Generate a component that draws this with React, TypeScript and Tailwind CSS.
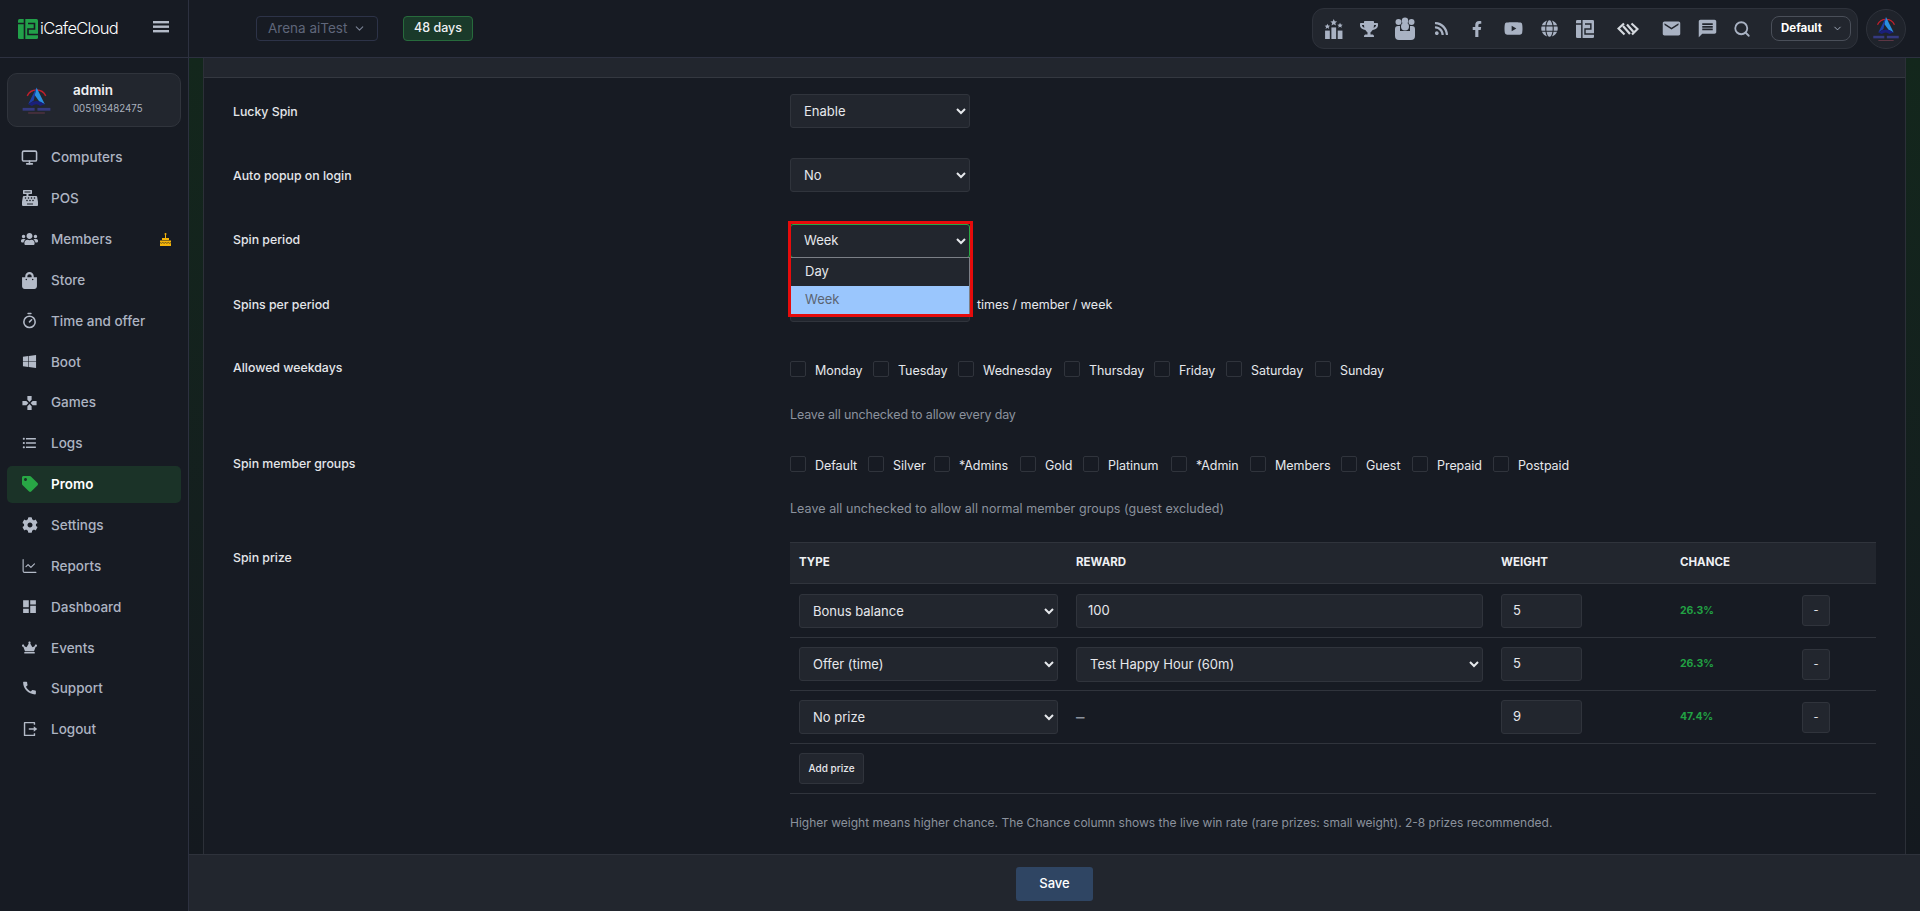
import { ChevronDown, Search, Timer, ChartLine, Monitor } from "lucide-react"
import {
  FaCashRegister,
  FaShoppingBag,
  FaUsers,
  FaWindows,
  FaTag,
  FaCog,
  FaCrown,
  FaTrophy,
  FaRss,
  FaFacebookF,
  FaYoutube,
  FaGlobe,
} from "react-icons/fa"
import { MdGames, MdDashboard, MdCall, MdEmail, MdMessage, MdFormatListBulleted } from "react-icons/md"
import { RiLogoutBoxRLine } from "react-icons/ri"

const navItems = [
  { label: "Computers", icon: <Monitor size={19} strokeWidth={2.2} /> },
  { label: "POS", icon: <FaCashRegister size={16} /> },
  { label: "Members", icon: <FaUsers size={18} />, cake: true },
  { label: "Store", icon: <FaShoppingBag size={17} /> },
  { label: "Time and offer", icon: <Timer size={17} strokeWidth={2.2} /> },
  { label: "Boot", icon: <FaWindows size={15} /> },
  { label: "Games", icon: <MdGames size={18} /> },
  { label: "Logs", icon: <MdFormatListBulleted size={18} /> },
  { label: "Promo", icon: <FaTag size={16} />, active: true },
  { label: "Settings", icon: <FaCog size={16} /> },
  { label: "Reports", icon: <ChartLine size={18} strokeWidth={1.6} /> },
  { label: "Dashboard", icon: <MdDashboard size={17} /> },
  { label: "Events", icon: <FaCrown size={15} /> },
  { label: "Support", icon: <MdCall size={18} /> },
  { label: "Logout", icon: <RiLogoutBoxRLine size={18} /> },
]

const weekdays = [
  { label: "Monday", w: "w-[83px]" },
  { label: "Tuesday", w: "w-[85px]" },
  { label: "Wednesday", w: "w-[106px]" },
  { label: "Thursday", w: "w-[90px]" },
  { label: "Friday", w: "w-[72px]" },
  { label: "Saturday", w: "w-[89px]" },
  { label: "Sunday", w: "w-[80px]" },
]

const groups = [
  { label: "Default", w: "w-[78px]" },
  { label: "Silver", w: "w-[66px]" },
  { label: "*Admins", w: "w-[86px]" },
  { label: "Gold", w: "w-[63px]" },
  { label: "Platinum", w: "w-[88px]" },
  { label: "*Admin", w: "w-[79px]" },
  { label: "Members", w: "w-[91px]" },
  { label: "Guest", w: "w-[71px]" },
  { label: "Prepaid", w: "w-[81px]" },
  { label: "Postpaid", w: "w-[90px]" },
]

const fieldClass =
  "bg-[#22262e] border border-[#30343c] rounded-[3px] text-[13px] text-[#e6e8ec] outline-none [color-scheme:dark]"

function BrandMark({ color, line, size }: { color: string; line: string; size: number }) {
  return (
    <svg width={size} height={size} viewBox="0 0 20 20">
      <rect width="20" height="20" rx="1.5" fill={color} />
      <path d="M6.5 0V20M0 4.5H6.5M10 4.5H16.5V10H10V15.5H20" stroke={line} strokeWidth="1.6" fill="none" />
    </svg>
  )
}

function ArenaLogo({ size }: { size: number }) {
  return (
    <svg width={size} height={size} viewBox="0 0 40 40">
      <path d="M10 15A11 11 0 0 1 30 15" stroke="#c21f2b" strokeWidth="1.5" fill="none" />
      <path d="M20 6L29 24L23 21L18 14Z" fill="#2a8fe0" />
      <path d="M20 6L11 24L17 20Z" fill="#1c3fa8" />
      <path d="M11 24Q20 17 29 24L24 26Q20 22 15 26Z" fill="#1a1f7a" />
      <rect x="5" y="28" width="13" height="3" fill="#353a80" />
      <rect x="21" y="28" width="14" height="3" fill="#353a80" />
      <rect x="11" y="33" width="18" height="1" fill="#6a3a4a" />
    </svg>
  )
}

function CakeIcon() {
  return (
    <svg className="ml-auto mr-[10px]" width="11" height="13" viewBox="0 0 11 13" fill="#f5b50a">
      <rect x="5" y="1.500" width="1" height="3.500" />
      <circle cx="5.500" cy="1" r="1" />
      <path d="M2 5H9V7H2Z" />
      <path d="M0 7.500H11V13H0Z" />
      <path d="M0 9.500Q1.400 11 2.750 9.500Q4.100 11 5.500 9.500Q6.900 11 8.250 9.500Q9.600 11 11 9.500" stroke="#171b23" strokeWidth=".6" fill="none" />
    </svg>
  )
}

function RankIcon() {
  return (
    <svg width="19" height="20" viewBox="0 0 18 19" fill="currentColor">
      <rect x="1" y="11" width="4.5" height="8" />
      <rect x="7" y="8" width="4.5" height="11" />
      <rect x="13" y="11" width="4.5" height="8" />
      <path d="M9.2 0l1 2.2 2.3.2-1.8 1.5.6 2.3-2.1-1.3-2.1 1.3.6-2.3L6 2.4l2.3-.2z" />
      <path d="M3.2 4.5l.8 1.7 1.8.2-1.4 1.2.5 1.8-1.7-1-1.7 1 .5-1.8L.6 6.400l1.800-.2z" />
      <path d="M15.200 3.500l.8 1.700 1.800.2-1.400 1.200.5 1.800-1.700-1-1.700 1 .5-1.800-1.400-1.200 1.800-.2z" />
    </svg>
  )
}

function GroupIcon() {
  return (
    <svg width="20" height="23" viewBox="0 0 20 23" fill="currentColor">
      <circle cx="3.500" cy="5" r="3" />
      <circle cx="16.500" cy="5" r="3" />
      <circle cx="10" cy="3.800" r="3.200" />
      <circle cx="10" cy="9.500" r="4" />
      <path d="M0 12Q0 9 3 9H5V14H15V9H17Q20 9 20 12V19Q20 23 16 23H4Q0 23 0 19Z" />
    </svg>
  )
}

function ChevronsLogo() {
  return (
    <svg width="22" height="14" viewBox="0 0 22 14" fill="none" stroke="#d5d9df" strokeWidth="2.2">
      <path d="M7 1.500L1.500 6.500L7.500 12.500" />
      <path d="M6 4L13 12M10 2.500L16.500 10" />
      <path d="M14.500 1.500L20.500 7L15 12.500" />
    </svg>
  )
}

function Sidebar() {
  return (
    <aside className="w-[189px] shrink-0 bg-[#171b23] border-r border-[#2d3140] flex flex-col">
      <div className="h-[58px] shrink-0 border-b border-[#2d3140] flex items-center pl-[18px]">
        <BrandMark color="#22a04a" line="#171b23" size={20} />
        <span className="ml-[2px] w-[76px] text-[16.500px] font-light tracking-[-0.7px] text-white">iCafeCloud</span>
        <svg className="ml-[37px] mb-[3px] text-[#b4bbc8]" width="16" height="12" viewBox="0 0 16 12" fill="currentColor">
          <rect width="16" height="2.400" />
          <rect y="4.500" width="16" height="2.400" />
          <rect y="9" width="16" height="2.400" />
        </svg>
      </div>
      <div className="mx-[7px] mt-[15px] h-[54px] bg-[#22262e] border border-[#30343c] rounded-[10px] flex items-center">
        <div className="ml-[10px]">
          <ArenaLogo size={37} />
        </div>
        <div className="ml-[18px] -mt-[1px]">
          <div className="text-[13.500px] font-semibold leading-[18px] text-[#eef0f3]">admin</div>
          <div className="text-[9.700px] leading-[19px] text-[#aab1bd]">005193482475</div>
        </div>
      </div>
      <nav className="mx-[7px] mt-[12px] flex flex-col gap-[3.85px]">
        {navItems.map((item) => (
          <div
            key={item.label}
            className={
              item.active
                ? "h-[37px] rounded-[5px] bg-[#1b3328] flex items-center pl-[14px] text-white font-semibold"
                : "h-[37px] rounded-[5px] flex items-center pl-[14px] text-[#adb4c2] font-medium"
            }
          >
            <span className={item.active ? "w-[17px] flex justify-center text-[#28a745]" : "w-[17px] flex justify-center text-[#b4bbc8]"}>
              {item.icon}
            </span>
            <span className="ml-[13px] text-[13.500px]">{item.label}</span>
            {item.cake && <CakeIcon />}
          </div>
        ))}
      </nav>
    </aside>
  )
}

function Header() {
  return (
    <header className="h-[58px] shrink-0 border-b border-[#2d3140] bg-[#171b23] flex items-start">
      <div className="ml-[67px] mt-[16px] w-[122px] h-[25px] border border-[#2d3348] rounded-[4px] flex items-center pl-[11px] text-[13.500px] text-[#5f667a]">
        Arena aiTest
        <ChevronDown size={13} className="ml-[6px] text-[#7a8194]" />
      </div>
      <div className="ml-[25px] mt-[16px] w-[70px] h-[25px] bg-[#1a3a2a] border border-[#276b3c] rounded-[4px] flex items-center justify-center text-[12.500px] font-medium text-[#eef0f3]">
        48 days
      </div>
      <div className="ml-auto mt-[8px] w-[546px] h-[41px] bg-[#22262e] border border-[#2e323b] rounded-[12px] flex items-center text-[#a9b2c3] relative">
        <div className="flex items-center h-full pl-[8px]">
          <span className="w-[36px] flex justify-center -ml-[6px]"><RankIcon /></span>
          <span className="w-[36px] flex justify-center"><FaTrophy size={18} /></span>
          <span className="w-[36px] flex justify-center"><GroupIcon /></span>
          <span className="w-[36px] flex justify-center"><FaRss size={15} /></span>
          <span className="w-[36px] flex justify-center"><FaFacebookF size={16} /></span>
          <span className="w-[36px] flex justify-center"><FaYoutube size={19} /></span>
          <span className="w-[36px] flex justify-center"><FaGlobe size={17} /></span>
          <span className="w-[36px] flex justify-center"><BrandMark color="#a9b2c3" line="#22262e" size={18} /></span>
          <span className="w-[50px] flex justify-center"><ChevronsLogo /></span>
          <span className="w-[36px] flex justify-center"><MdEmail size={21} /></span>
          <span className="w-[36px] flex justify-center"><MdMessage size={21} /></span>
          <span className="w-[34px] flex justify-center"><Search size={18} strokeWidth={2.4} /></span>
        </div>
        <div className="ml-[12px] w-[80px] h-[25px] border border-[#4a4f59] rounded-[8px] flex items-center pl-[9px] text-[11.500px] font-bold text-white">
          Default
          <ChevronDown size={11} className="ml-[10px] text-[#a9b2c3]" />
        </div>
      </div>
      <div className="ml-[8px] mr-[14px] mt-[9px] w-[40px] h-[40px] rounded-full bg-[#1f232b] border border-[#2e323b] flex items-center justify-center">
        <ArenaLogo size={34} />
      </div>
    </header>
  )
}

function CheckRow({ items }: { items: { label: string; w: string }[] }) {
  return (
    <div className="flex h-[16px]">
      {items.map((item) => (
        <label key={item.label} className={`${item.w} shrink-0 flex items-start`}>
          <span className="w-[16px] h-[16px] shrink-0 border border-[#30343c] rounded-[2px] bg-[#171b23]" />
          <span className="ml-[9px] mt-[1px] text-[12.500px] leading-[18px] whitespace-nowrap tracking-[-0.05px] text-[#e6e8ec]">
            {item.label}
          </span>
        </label>
      ))}
    </div>
  )
}

function FieldLabel({ children, className }: { children: string; className: string }) {
  return <div className={`w-[557px] shrink-0 text-[12.300px] font-medium leading-[20px] text-[#e4e6ea] ${className}`}>{children}</div>
}

function PrizeRow({
  type,
  reward,
  weight,
  chance,
  height,
}: {
  type: string
  reward: React.ReactNode
  weight: string
  chance: string
  height: string
}) {
  return (
    <div className={`grid grid-cols-[277px_425px_179px_122px_83px] items-center border-b border-[#30343c] ${height}`}>
      <div className="px-[9px]">
        <select defaultValue={type} className={`${fieldClass} w-full h-[34px] pl-[9px]`}>
          <option>{type}</option>
        </select>
      </div>
      <div className="px-[9px]">{reward}</div>
      <div className="px-[9px]">
        <div className={`${fieldClass} w-[81px] h-[34px] flex items-center pl-[11px]`}>{weight}</div>
      </div>
      <div className="px-[9px] text-[10.500px] font-bold text-[#22a244]">{chance}</div>
      <div className="px-[9px]">
        <button className="w-[28px] h-[31px] bg-[#22262e] border border-[#30343c] rounded-[3px] text-[11px] text-[#e6e8ec]">-</button>
      </div>
    </div>
  )
}

export default function App() {
  return (
    <div className="flex h-[911px] overflow-hidden bg-[#171b23] font-['Inter',sans-serif]">
      <Sidebar />
      <div className="flex-1 min-w-0 flex flex-col">
        <Header />
        <main className="flex-1 min-h-0 overflow-hidden px-[14px] bg-linear-to-b from-[#13271c] to-[#14191f]">
          <div className="h-full bg-[#171b23] border-x border-[#2c3038]">
            <div className="h-[20px] bg-[#22262e] border-b border-[#343840]" />
            <div className="pl-[29px] pr-[29px] pt-[16px]">
              <div className="flex">
                <FieldLabel className="pt-[8px]">Lucky Spin</FieldLabel>
                <select defaultValue="Enable" className={`${fieldClass} w-[180px] h-[34px] pl-[9px] pb-[1px]`}>
                  <option>Enable</option>
                  <option>Disable</option>
                </select>
              </div>
              <div className="flex mt-[30px]">
                <FieldLabel className="pt-[8px]">Auto popup on login</FieldLabel>
                <select defaultValue="No" className={`${fieldClass} w-[180px] h-[34px] pl-[9px]`}>
                  <option>No</option>
                  <option>Yes</option>
                </select>
              </div>
              <div className="flex mt-[32px]">
                <FieldLabel className="pt-[6px]">Spin period</FieldLabel>
                <div className="relative w-[180px] h-[34px]">
                  <select defaultValue="Week" className={`${fieldClass} w-full h-full pl-[9px] pb-[2px] !border-[#28a745]`}>
                    <option>Day</option>
                    <option>Week</option>
                  </select>
                  <div className="absolute left-0 top-[33px] w-[180px] h-[58px] z-10 bg-[#22262e] border border-[#7b7f86] text-[13px]">
                    <div className="h-[28px] flex items-center pl-[14px] text-[#e6e8ec]">Day</div>
                    <div className="h-[28px] flex items-center pl-[14px] bg-[#9ac6fd] text-[#5a6472]">Week</div>
                  </div>
                  <div className="absolute -left-[2px] -top-[3px] w-[185px] h-[96px] z-20 border-[3px] border-[#e60b0b] pointer-events-none" />
                </div>
              </div>
              <div className="flex mt-[30px] items-center">
                <FieldLabel className="">Spins per period</FieldLabel>
                <div className={`${fieldClass} w-[180px] h-[34px]`} />
                <span className="ml-[7px] text-[12.500px] text-[#e6e8ec]">times / member / week</span>
              </div>
              <div className="flex mt-[39px]">
                <FieldLabel className="-mt-[3px]">Allowed weekdays</FieldLabel>
                <div>
                  <CheckRow items={weekdays} />
                  <p className="mt-[28px] text-[12.500px] leading-[20px] tracking-[-0.15px] text-[#8b929d]">Leave all unchecked to allow every day</p>
                </div>
              </div>
              <div className="flex mt-[31px]">
                <FieldLabel className="-mt-[2px]">Spin member groups</FieldLabel>
                <div>
                  <CheckRow items={groups} />
                  <p className="mt-[27px] text-[12.500px] leading-[20px] tracking-[0.05px] text-[#8b929d]">
                    Leave all unchecked to allow all normal member groups (guest excluded)
                  </p>
                </div>
              </div>
              <div className="flex mt-[23px]">
                <FieldLabel className="pt-[6px]">Spin prize</FieldLabel>
                <div className="w-[1086px]">
                  <div className="grid grid-cols-[277px_425px_179px_122px_83px] items-center h-[42px] bg-[#22262e] border-y border-[#30343c] text-[11.500px] font-bold text-[#eef0f3]">
                    <div className="px-[9px]">TYPE</div>
                    <div className="px-[9px]">REWARD</div>
                    <div className="px-[9px]">WEIGHT</div>
                    <div className="px-[9px]">CHANCE</div>
                    <div />
                  </div>
                  <PrizeRow
                    type="Bonus balance"
                    height="h-[54px]"
                    weight="5"
                    chance="26.3%"
                    reward={<div className={`${fieldClass} w-full h-[34px] flex items-center pl-[11px]`}>100</div>}
                  />
                  <PrizeRow
                    type="Offer (time)"
                    height="h-[53px]"
                    weight="5"
                    chance="26.3%"
                    reward={
                      <select defaultValue="Test Happy Hour (60m)" className={`${fieldClass} w-full h-[35px] pl-[9px]`}>
                        <option>Test Happy Hour (60m)</option>
                      </select>
                    }
                  />
                  <PrizeRow
                    type="No prize"
                    height="h-[53px]"
                    weight="9"
                    chance="47.4%"
                    reward={<span className="text-[17px] font-medium leading-[17px] text-[#8b929d]">–</span>}
                  />
                  <div className="h-[50px] border-b border-[#30343c] px-[9px] pt-[9px]">
                    <button className="w-[65px] h-[31px] bg-[#22262e] border border-[#30343c] rounded-[3px] text-[10px] font-medium text-[#e6e8ec]">
                      Add prize
                    </button>
                  </div>
                  <p className="mt-[19px] text-[12px] leading-[20px] whitespace-nowrap text-[#8b929d]">
                    Higher weight means higher chance. The Chance column shows the live win rate (rare prizes: small weight). 2-8 prizes recommended.
                  </p>
                </div>
              </div>
            </div>
          </div>
        </main>
        <footer className="h-[57px] shrink-0 bg-[#22262e] border-t border-[#2e323b] flex justify-center pt-[12px]">
          <button className="w-[77px] h-[34px] bg-[#2f4563] rounded-[3px] text-[13px] font-medium text-white">Save</button>
        </footer>
      </div>
    </div>
  )
}
